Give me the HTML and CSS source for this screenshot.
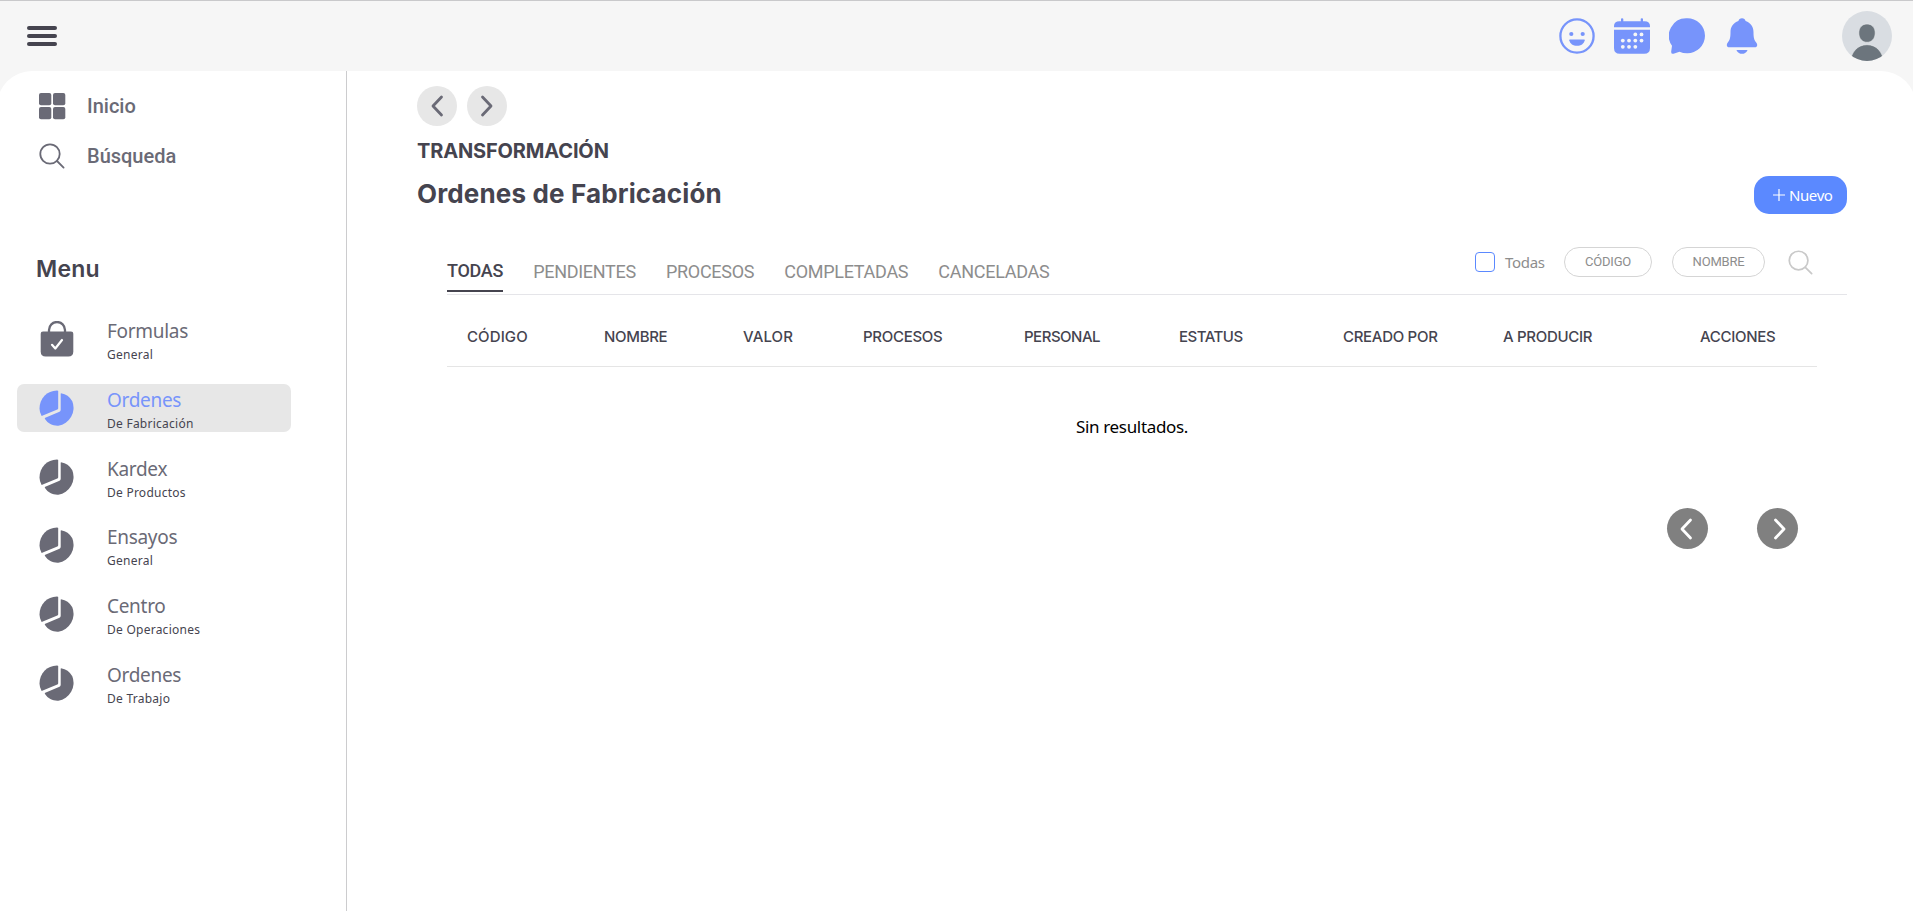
FILE: index.html
```html
<!DOCTYPE html>
<html lang="es">
<head>
<meta charset="utf-8">
<title>Ordenes de Fabricación</title>
<link rel="stylesheet" href="styles.css">
</head>
<body>
<svg class="defs" width="0" height="0" aria-hidden="true">
  <symbol id="pie" viewBox="0 0 36 36">
    <path d="M19.200 1v17.200q0 .9-.9 1.300L2.600 26Q.5 22.200.5 18.600C.5 8.300 8 .5 18 .4q1.200 0 1.200.6z"/>
    <path d="M22 3.300q7.500 1.200 11.300 8a18 18 0 0 1-14 24.400C14 36 9 33.600 6 29q-.5-.8.300-1.200L20.500 21.700q1.200-.5 1.200-2V3.700q0-.4.300-.4z"/>
  </symbol>
  <symbol id="search" viewBox="0 0 26 26">
    <circle cx="11" cy="11" r="9.700"/><path d="M18 18l6.600 6.600"/>
  </symbol>
  <symbol id="left" viewBox="0 0 14 22"><path d="M11.500 2L3 11l8.500 9"/></symbol>
  <symbol id="right" viewBox="0 0 14 22"><path d="M2.500 2L11 11l-8.500 9"/></symbol>
</svg>
<header class="topbar">
  <div class="burger"><span></span><span></span><span></span></div>
  <div class="tools">
    <svg class="tool" viewBox="0 0 36 36"><circle cx="18" cy="18" r="16.600" fill="none" stroke="#7794fb" stroke-width="2.300"/><circle cx="12.300" cy="16" r="2.100"/><circle cx="23.700" cy="16" r="2.100"/><path d="M10.700 21.500h14.600q.5 0 .4.700c-.8 3.600-3.700 5.600-7.700 5.600s-6.900-2-7.700-5.600q-.1-.7.400-.7z"/></svg>
    <svg class="tool" viewBox="0 0 36 36"><path d="M7 1q0-.8 1.100-.8T9.300 1v2.300h17.400V1q0-.8 1.200-.8T29 1v2.300h1.500Q36 3.300 36 8v1.200H0V8Q0 3.300 5.500 3.300H7z"/><path d="M0 11.700h36V30q0 5.800-5.800 5.800H5.800Q0 35.800 0 30z"/><g fill="#f6f6f6"><circle cx="21.300" cy="16.400" r="1.900"/><circle cx="27.500" cy="16.400" r="1.900"/><circle cx="8.800" cy="22.600" r="1.900"/><circle cx="15" cy="22.600" r="1.900"/><circle cx="21.300" cy="22.600" r="1.900"/><circle cx="27.500" cy="22.600" r="1.900"/><circle cx="8.800" cy="28.800" r="1.900"/><circle cx="15" cy="28.800" r="1.900"/><circle cx="21.300" cy="28.800" r="1.900"/></g></svg>
    <svg class="tool" viewBox="0 0 36 36"><path d="M18 .3A17.500 17.500 0 0 1 36 17.800 17.500 17.500 0 0 1 18 35.200q-4 0-7.500-1.500l-6 2Q2 36.200 2.200 33.500l.8-5.700A17.500 17.500 0 0 1 18 .3z"/></svg>
    <svg class="tool" viewBox="0 0 36 36"><path d="M18 .2c2 0 3.200 1.300 3.600 2.900C26.700 4.900 29.500 9 29.500 14c0 5.500.5 8 2.700 10.400q1 1.100 1 2.500c0 1.600-1 2.400-2.600 2.400H5.400c-1.600 0-2.600-.8-2.600-2.400q0-1.400 1-2.500C6 22 6.500 19.500 6.500 14c0-5 2.800-9.100 7.900-10.900C14.800 1.500 16 .2 18 .2z"/><path d="M13 32h10q.7 0 .3.700c-1.200 2-3 3.100-5.300 3.100s-4.100-1.100-5.300-3.100q-.4-.7.300-.7z"/></svg>
  </div>
  <svg class="avatar" viewBox="0 0 50 50"><clipPath id="round"><circle cx="25" cy="25" r="25"/></clipPath><g clip-path="url(#round)"><path fill="#d9dde2" d="M0 0h50v50H0z"/><path fill="#6c757d" stroke="#eceef0" stroke-width=".6" d="M25 13c5 0 8.200 3.600 8.200 9 0 5.600-3.500 9.300-8.200 9.300s-8.200-3.700-8.200-9.300c0-5.400 3.200-9 8.200-9z"/><path fill="#6c757d" stroke="#eceef0" stroke-width=".6" d="M8 52c1-11 7.500-18.300 17-18.300S41 41 42 52z"/></g></svg>
</header>
<div class="page">
  <aside class="sidebar">
    <nav class="quick">
      <a class="quick-item"><svg class="quick-icon" viewBox="0 0 28 28" fill="#6a6a76"><rect x="1" y="1" width="12.300" height="12.300" rx="2"/><rect x="15" y="1" width="12.300" height="12.300" rx="2"/><rect x="1" y="15" width="12.300" height="12.300" rx="2"/><rect x="15" y="15" width="12.300" height="12.300" rx="2"/></svg><span>Inicio</span></a>
      <a class="quick-item"><svg class="quick-icon line"><use href="#search" x="1" y="1" width="26" height="26"/></svg><span>Búsqueda</span></a>
    </nav>
    <h2 class="menu-title">Menu</h2>
    <nav class="menu">
      <a class="item"><svg class="item-icon" viewBox="0 0 36 36"><path fill="none" stroke="#6a6a76" stroke-width="2.300" d="M10 12V9a8 8 0 0 1 16 0v3"/><path d="M4 10.500h28q2.300 0 2.300 2.300V30.500q0 5-5 5H6.700q-5 0-5-5V12.800q0-2.300 2.300-2.300z"/><path fill="none" stroke="#fff" stroke-width="2.200" stroke-linecap="round" stroke-linejoin="round" d="M13 23.800l3.300 3.700L23 19"/></svg><span class="label"><b>Formulas</b><small>General</small></span></a>
      <a class="item active"><svg class="item-icon"><use href="#pie"/></svg><span class="label"><b>Ordenes</b><small>De Fabricación</small></span></a>
      <a class="item"><svg class="item-icon"><use href="#pie"/></svg><span class="label"><b>Kardex</b><small>De Productos</small></span></a>
      <a class="item"><svg class="item-icon"><use href="#pie"/></svg><span class="label"><b>Ensayos</b><small>General</small></span></a>
      <a class="item"><svg class="item-icon"><use href="#pie"/></svg><span class="label"><b>Centro</b><small>De Operaciones</small></span></a>
      <a class="item"><svg class="item-icon"><use href="#pie"/></svg><span class="label"><b>Ordenes</b><small>De Trabajo</small></span></a>
    </nav>
  </aside>
  <main class="content">
    <div class="history"><button class="round"><svg><use href="#left"/></svg></button><button class="round"><svg><use href="#right"/></svg></button></div>
    <h1 class="section">TRANSFORMACIÓN</h1>
    <div class="heading"><h2 class="title">Ordenes de Fabricación</h2><button class="new"><svg viewBox="0 0 12 12"><path d="M6 0v12M0 6h12"/></svg><span>Nuevo</span></button></div>
    <div class="bar">
      <nav class="tabs"><a class="tab on">TODAS</a><a class="tab">PENDIENTES</a><a class="tab">PROCESOS</a><a class="tab">COMPLETADAS</a><a class="tab">CANCELADAS</a></nav>
      <div class="filters"><i class="check"></i><span class="all">Todas</span><button class="pill code">CÓDIGO</button><button class="pill name">NOMBRE</button><svg class="find"><use href="#search"/></svg></div>
    </div>
    <div class="thead"><span class="wide">CÓDIGO</span><span>NOMBRE</span><span class="wide">VALOR</span><span>PROCESOS</span><span class="tight">PERSONAL</span><span class="tight">ESTATUS</span><span>CREADO POR</span><span>A PRODUCIR</span><span>ACCIONES</span></div>
    <p class="empty">Sin resultados.</p>
    <div class="pager"><button class="prev"><svg><use href="#left"/></svg></button><button class="next"><svg><use href="#right"/></svg></button></div>
  </main>
</div>
</body>
</html>
```

FILE: styles.css
```css
* { box-sizing: border-box; }
body { margin: 0; height: 911px; overflow: hidden; background: #f6f6f6; border-top: 1px solid #c9c9cb; font-family: "Noto Sans", sans-serif; color: #45444f; display: flex; flex-direction: column; }
button { font: inherit; border: 0; padding: 0; margin: 0; }
h1, h2, p { margin: 0; }
svg { display: block; flex: none; }
.defs { display: none; }
.topbar { height: 70px; flex: none; display: flex; align-items: center; padding: 0 21px 0 27px; }
.burger { width: 30px; display: grid; gap: 4px; margin-right: auto; }
.burger span { height: 4px; border-radius: 2px; background: #45444f; }
.tools { display: flex; gap: 19px; margin-right: 82px; }
.tool { width: 36px; height: 36px; fill: #7794fb; }
.avatar { width: 50px; height: 50px; }
.page { flex: 1; display: flex; margin: 0 -3px; padding: 0 3px; background: #fff; border-radius: 35px 35px 0 0; }
.sidebar { width: 347px; flex: none; border-right: 1px solid #ccccce; }
.quick { padding: 10px 0 0 38px; }
.quick-item { display: flex; align-items: center; height: 50px; gap: 21px; font: 500 20px/50px Roboto, sans-serif; color: #6a6a76; }
.quick-icon { width: 28px; height: 28px; }
.line { fill: none; stroke: #6a6a76; stroke-width: 1.800; stroke-linecap: round; }
.menu-title { margin: 71px 0 0 36px; font: 600 23px/34px Inter, sans-serif; letter-spacing: .2px; }
.menu { margin-top: 29px; padding-left: 17px; display: grid; gap: 20.800px; }
.item { width: 274px; height: 48px; border-radius: 7px; display: flex; padding: 6px 0 0 22px; gap: 32px; fill: #6a6a76; }
.item-icon { width: 36px; height: 36px; }
.label b { display: block; font-weight: 400; font-size: 19px; line-height: 20px; letter-spacing: -.3px; color: #6a6a76; white-space: nowrap; }
.label small { display: block; font-size: 12px; line-height: 16px; margin-top: 6px; letter-spacing: .25px; white-space: nowrap; }
.active { background: #e7e7e7; fill: #7794fb; }
.active b { color: #7794fb; }
.content { flex: 1; padding: 15px 66px 0 70px; }
.history { display: flex; gap: 10px; }
.round { width: 40px; height: 40px; border-radius: 50%; background: #e7e7e7; display: grid; place-items: center; }
.round svg, .pager svg { width: 14px; height: 22px; fill: none; stroke: #6a6a76; stroke-width: 2.800; stroke-linecap: round; stroke-linejoin: round; }
.section { margin-top: 10px; font: 700 20px/30px Inter, sans-serif; letter-spacing: -.15px; }
.heading { display: flex; justify-content: space-between; height: 58px; align-items: center; }
.title { margin-bottom: 2px; font: 700 26px/38px Inter, sans-serif; letter-spacing: .15px; }
.new { width: 93px; height: 38px; border-radius: 15px; background: #5b89ff; color: #fff; display: flex; align-items: center; gap: 4px; padding-left: 19px; font-size: 15px; letter-spacing: -.4px; }
.new svg { width: 12px; height: 12px; stroke: #fff; stroke-width: 1.200; }
.bar { margin: 16px 0 0 30px; height: 55px; border-bottom: 1px solid #e5e5e9; display: flex; justify-content: space-between; }
.tabs { display: flex; gap: 30px; font: 400 18px/23px Roboto, sans-serif; letter-spacing: -.28px; color: #8d8d8d; padding-top: 20px; }
.tab { height: 32px; }
.tab.on { color: #45444f; font-weight: 500; border-bottom: 2px solid #45444f; line-height: 21px; }
.filters { display: flex; align-items: center; height: 30px; margin: 7px 34px 0 0; }
.check { width: 20px; height: 20px; border: 1px solid #5b89ff; border-radius: 4px; }
.all { margin-left: 10px; width: 59px; font-size: 15px; letter-spacing: -.3px; color: #8d8d8d; }
.pill { height: 30px; border: 1px solid #d5d5d5; border-radius: 15px; background: #fff; color: #8d8d8d; font: 400 13px/26px Roboto, sans-serif; letter-spacing: -.2px; }
.code { width: 88px; margin-right: 20px; }
.name { width: 93px; margin-right: 23px; }
.find { width: 25px; height: 25px; fill: none; stroke: #c9c9c9; stroke-width: 1.800; stroke-linecap: round; }
.thead { margin: 0 30px; height: 72px; border-bottom: 1px solid #e5e5e5; display: grid; grid-template-columns: 137px 139px 120px 161px 155px 164px 160px 197px auto; padding: 12px 0 0 20px; align-items: center; font: 500 15px/22px Inter, sans-serif; letter-spacing: -.3px; white-space: nowrap; }
.wide { letter-spacing: .1px; }
.tight { letter-spacing: -.5px; }
.empty { margin: 46px 30px 0; text-align: center; color: #000; font-size: 17px; line-height: 28px; letter-spacing: -.33px; }
.pager { display: flex; justify-content: flex-end; gap: 49px; margin: 67px 49px 0 0; }
.pager button { width: 41px; height: 41px; border-radius: 50%; background: #808080; display: grid; place-items: center; }
.pager svg { stroke: #fff; }
.pager .prev { padding-right: 4px; }
.pager .next { padding-left: 4px; }
```
